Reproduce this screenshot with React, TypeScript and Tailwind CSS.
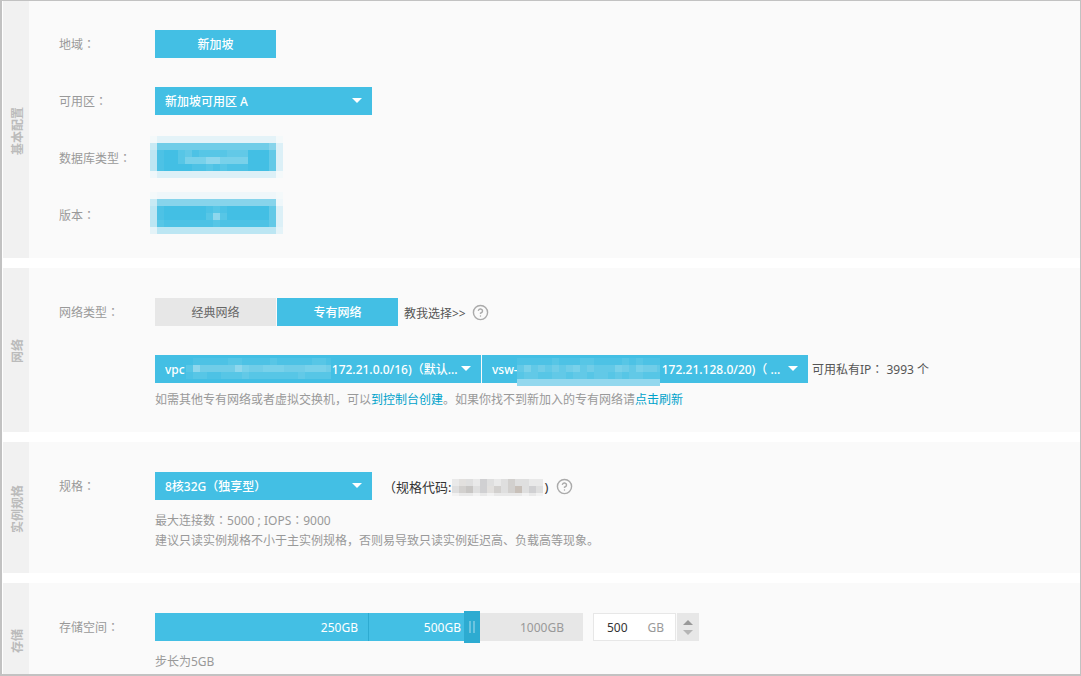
import React, { useState } from 'react';
import { CircleHelp } from 'lucide-react';

const FONT = "font-['Noto_Sans','Noto_Sans_CJK_SC',sans-serif]";

const PALETTE: Record<string, string> = {
  a: '#f4f9fa',
  b: '#e4f3f8',
  c: '#c9eaf4',
  d: '#70cde8',
  e: '#87d4eb',
  f: '#bce6f3',
  g: '#4dc2e5',
  h: '#43bfe4',
  i: '#62c9e7',
  j: '#dcf0f7',
  k: '#57c6e6',
  l: '#78d1ea',
  m: '#8ed7ed',
  n: '#eff7fa',
  o: '#93d8ee',
  A: '#e9e9e9',
  B: '#dfdfdf',
  C: '#d2d0ce',
  D: '#c8c6c4',
  E: '#e2e0de',
  F: '#d0d0d2',
  G: '#c8c0b9',
  H: '#f2f2f2',
};

// Blurred-out values, one letter per 7px cell
const DB_TYPE = [
  'abbbbbbbbbbbbbbbbba',
  'cddddddddddddddddej',
  'fghhkigkkkkiiihhhij',
  'fghhklllmmllllhhhij',
  'fghhhhggkgkggghhhij',
  'njjjjjjjjjjjjjjjjja',
];

const VERSION = [
  'annnnnnnnnnnnnnnnna',
  'ceeeeeeeeeeeeeeeeen',
  'fghhhhhhgkghhhhhhij',
  'fghhhhhhkmkhhhhhhij',
  'fkgggggggkgggggggij',
  'bfffffffffffffffffb',
];

const VPC_ID = [
  'hgggggkkggggkgggggkkg',
  'kmdddddmlddllldddllld',
  'gkkggkkkikkkkkkkikkkk',
];

const VSWITCH_ID = [
  'gggggkgggkkggggkgkggg',
  'ilidididlidiiildilddi',
  'kiikkiikiikiikikiikkk',
  'ooooooooooooooooooooo',
];

const SPEC_CODE = [
  'AEBAFBABCBBAA',
  'BCDBFECBCGBFB',
  'HAAHAHAAAAHAH',
];

// The svg clips cells that fall outside the size given by className
function Mosaic({ rows, className }: { rows: string[]; className: string }) {
  return (
    <svg aria-hidden="true" shapeRendering="crispEdges" className={`pointer-events-none max-w-none ${className}`}>
      {rows.map((row, y) =>
        row.split('').map((cell, x) => (
          <rect key={`${x}-${y}`} x={x * 7} y={y * 7} width="7" height="7" fill={PALETTE[cell]} />
        ))
      )}
    </svg>
  );
}

function Colon() {
  return <span className="font-['Noto_Sans_CJK_JP',sans-serif] leading-none">：</span>;
}

function Section({
  title,
  className,
  children,
}: {
  title: string;
  className: string;
  children: React.ReactNode;
}) {
  return (
    <section className="flex shrink-0 bg-[#fafafa]">
      <div className="flex w-[26px] shrink-0 items-center justify-center bg-[#f1f1f1] pt-[3px] pl-[3px]">
        <h2 className="rotate-180 font-bold text-[#bbb] [text-orientation:sideways] [writing-mode:vertical-rl]">
          {title}
        </h2>
      </div>
      <div className={`min-w-0 flex-1 pl-[30px] ${className}`}>{children}</div>
    </section>
  );
}

function Row({ label, htmlFor, children }: { label: string; htmlFor?: string; children: React.ReactNode }) {
  return (
    <div className="flex h-7 items-center">
      <label htmlFor={htmlFor} className="w-24 shrink-0 pt-0.5 text-[#999]">
        {label}
        <Colon />
      </label>
      {children}
    </div>
  );
}

function Select({
  id,
  label,
  text,
  className,
  children,
}: {
  id: string;
  label?: string;
  text: string;
  className: string;
  children?: React.ReactNode;
}) {
  return (
    <div className={`relative h-7 shrink-0 ${className}`}>
      <select
        id={id}
        aria-label={label}
        className="h-7 w-full appearance-none bg-[#43bfe4] pt-0.5 pl-[10px] font-medium text-white outline-none"
      >
        <option>{text}</option>
      </select>
      {children}
      <svg
        aria-hidden="true"
        viewBox="0 0 10 5"
        className="pointer-events-none absolute top-[11px] right-[10px] h-[5px] w-[10px] fill-white"
      >
        <path d="M0 0h10L5 5z" />
      </svg>
    </div>
  );
}

function Help() {
  return (
    <button type="button" aria-label="帮助" className="ml-1 text-[#aaa]">
      <CircleHelp size={17} />
    </button>
  );
}

const GAP = '\u2003'.repeat(12);

// The first half of the track covers 0-250GB, the last two quarters 250-500GB and 500-1000GB
const toPosition = (gb: number) => {
  if (gb <= 250) return gb / 5;
  if (gb <= 500) return 50 + (gb - 250) / 10;
  return 75 + (gb - 500) / 20;
};

const toSize = (pos: number) => {
  let gb = 500 + (pos - 75) * 20;
  if (pos <= 50) gb = pos * 5;
  else if (pos <= 75) gb = 250 + (pos - 50) * 10;
  return Math.round(gb / 5) * 5;
};

export default function App() {
  const [network, setNetwork] = useState('vpc');
  const [size, setSize] = useState(500);

  const tab = (value: string) =>
    network === value ? 'bg-[#43bfe4] font-medium text-white' : 'bg-[#e7e7e7] text-[#666]';

  return (
    <main
      className={`flex h-screen flex-col gap-[10px] overflow-hidden border-t border-r border-b-2 border-l-2 border-[#c2c2c2] bg-white pl-px text-[12px] leading-5 ${FONT}`}
    >
      <Section title="基本配置" className="space-y-[29px] py-[29px]">
        <Row label="地域">
          <button type="button" className="h-7 w-[121px] bg-[#43bfe4] pt-0.5 font-medium text-white">
            新加坡
          </button>
        </Row>
        <Row label="可用区" htmlFor="zone">
          <Select id="zone" text="新加坡可用区 A" className="w-[217px]" />
        </Row>
        <Row label="数据库类型">
          <button type="button" aria-label="数据库类型" className="relative h-7 w-[121px] bg-[#43bfe4]">
            <Mosaic rows={DB_TYPE} className="absolute -top-2 -left-[5px] h-[42px] w-[133px]" />
          </button>
        </Row>
        <Row label="版本">
          <button type="button" aria-label="版本" className="relative h-7 w-[121px]">
            <Mosaic rows={VERSION} className="absolute -top-[9px] -left-[5px] h-[42px] w-[133px]" />
          </button>
        </Row>
      </Section>

      <Section title="网络" className="pt-[30px] pb-[22px]">
        <Row label="网络类型">
          <div className="flex gap-px">
            <button
              type="button"
              onClick={() => setNetwork('classic')}
              className={`h-7 w-[121px] pt-0.5 ${tab('classic')}`}
            >
              经典网络
            </button>
            <button
              type="button"
              onClick={() => setNetwork('vpc')}
              className={`h-7 w-[121px] pt-0.5 ${tab('vpc')}`}
            >
              专有网络
            </button>
          </div>
          <a href="#" className="mr-0.5 ml-[6px] pt-1 text-[#555]">
            教我选择&gt;&gt;
          </a>
          <Help />
        </Row>
        <div className="mt-[29px] flex h-7 items-center pl-24">
          <Select
            id="vpc"
            label="专有网络"
            text={`vpc${GAP}\u00a0172.21.0.0/16)（默认...`}
            className="w-[326px]"
          >
            <Mosaic rows={VPC_ID} className="absolute top-[3px] left-[31px] h-[21px] w-[145px]" />
          </Select>
          <Select
            id="vswitch"
            label="虚拟交换机"
            text={`vsw-${GAP}172.21.128.0/20)（ ...`}
            className="ml-px w-[326px]"
          >
            <Mosaic rows={VSWITCH_ID} className="absolute top-[3px] left-[35px] h-7 w-[143px]" />
          </Select>
          <span className="ml-1 pt-0.5 text-[#555]">
            可用私有IP
            <Colon /> 3993 个
          </span>
        </div>
        <p className="mt-[7px] pl-24 text-[#999]">
          如需其他专有网络或者虚拟交换机，可以
          <a href="#" className="text-[#00a2ca]">
            到控制台创建
          </a>
          。如果你找不到新加入的专有网络请
          <a href="#" className="text-[#00a2ca]">
            点击刷新
          </a>
        </p>
      </Section>

      <Section title="实例规格" className="pt-[30px] pb-[22px]">
        <Row label="规格" htmlFor="spec">
          <Select id="spec" text="8核32G（独享型）" className="w-[217px]" />
          <span className="ml-[11px] flex items-center pt-0.5 text-[13px] text-[#333]">
            （规格代码:
            <Mosaic rows={SPEC_CODE} className="mx-px h-[17px] w-[91px]" />
            )
          </span>
          <span className="ml-1 flex">
            <Help />
          </span>
        </Row>
        <div className="mt-[11px] pl-24 text-[#999]">
          <p>
            最大连接数
            <Colon />
            5000 ; IOPS
            <Colon />
            9000
          </p>
          <p>建议只读实例规格不小于主实例规格，否则易导致只读实例延迟高、负载高等现象。</p>
        </div>
      </Section>

      <Section title="存储" className="pt-[30px] pb-[25px]">
        <Row label="存储空间" htmlFor="storage">
          <div className="relative h-7 w-[428px] bg-[#e7e7e7]">
            <div className="absolute inset-y-0 left-0 bg-[#43bfe4]" style={{ width: `${toPosition(size)}%` }} />
            <div className="relative flex h-7 text-right leading-[30px]">
              <span className="w-1/2 border-r border-[#2dabd1] pr-[10px] text-white">250GB</span>
              <span className="w-1/4 pr-[15px] text-white">500GB</span>
              <span className="w-1/4 pr-[19px] text-[#999]">1000GB</span>
            </div>
            <input
              id="storage"
              type="range"
              min={0}
              max={100}
              value={toPosition(size)}
              onChange={(e) => setSize(toSize(Number(e.target.value)))}
              className="absolute -top-[2px] left-0 h-8 w-full appearance-none bg-transparent outline-none [&::-webkit-slider-thumb]:h-8 [&::-webkit-slider-thumb]:w-4 [&::-webkit-slider-thumb]:appearance-none [&::-webkit-slider-thumb]:bg-[#2dabd1] [&::-webkit-slider-thumb]:bg-[linear-gradient(90deg,#6cc4df_2px,transparent_2px,transparent_4px,#6cc4df_4px)] [&::-webkit-slider-thumb]:bg-[length:6px_12px] [&::-webkit-slider-thumb]:bg-center [&::-webkit-slider-thumb]:bg-no-repeat"
            />
          </div>
          <div className="ml-[10px] flex h-7 w-[83px] items-center justify-between border border-[#e7e7e7] bg-white pt-0.5 pr-[11px] pl-[13px]">
            <input
              type="number"
              aria-label="存储空间 GB"
              step={5}
              value={size}
              onChange={(e) => setSize(Number(e.target.value))}
              className="w-8 appearance-none text-[#333] outline-none [&::-webkit-inner-spin-button]:appearance-none"
            />
            <span className="text-[#999]">GB</span>
          </div>
          <div className="ml-px flex h-7 w-[22px] flex-col items-center justify-center bg-[#e7e7e7]">
            <button
              type="button"
              aria-label="增加"
              onClick={() => setSize(Math.min(1000, size + 5))}
              className="flex h-[10px] w-full items-center justify-center"
            >
              <svg viewBox="0 0 10 5" className="h-[5px] w-[10px] fill-[#999]">
                <path d="M0 5h10L5 0z" />
              </svg>
            </button>
            <button
              type="button"
              aria-label="减少"
              onClick={() => setSize(Math.max(5, size - 5))}
              className="flex h-[10px] w-full items-center justify-center"
            >
              <svg viewBox="0 0 10 5" className="h-[5px] w-[10px] fill-[#b5b5b5]">
                <path d="M0 0h10L5 5z" />
              </svg>
            </button>
          </div>
        </Row>
        <p className="mt-[11px] pl-24 text-[#999]">步长为5GB</p>
      </Section>
    </main>
  );
}
